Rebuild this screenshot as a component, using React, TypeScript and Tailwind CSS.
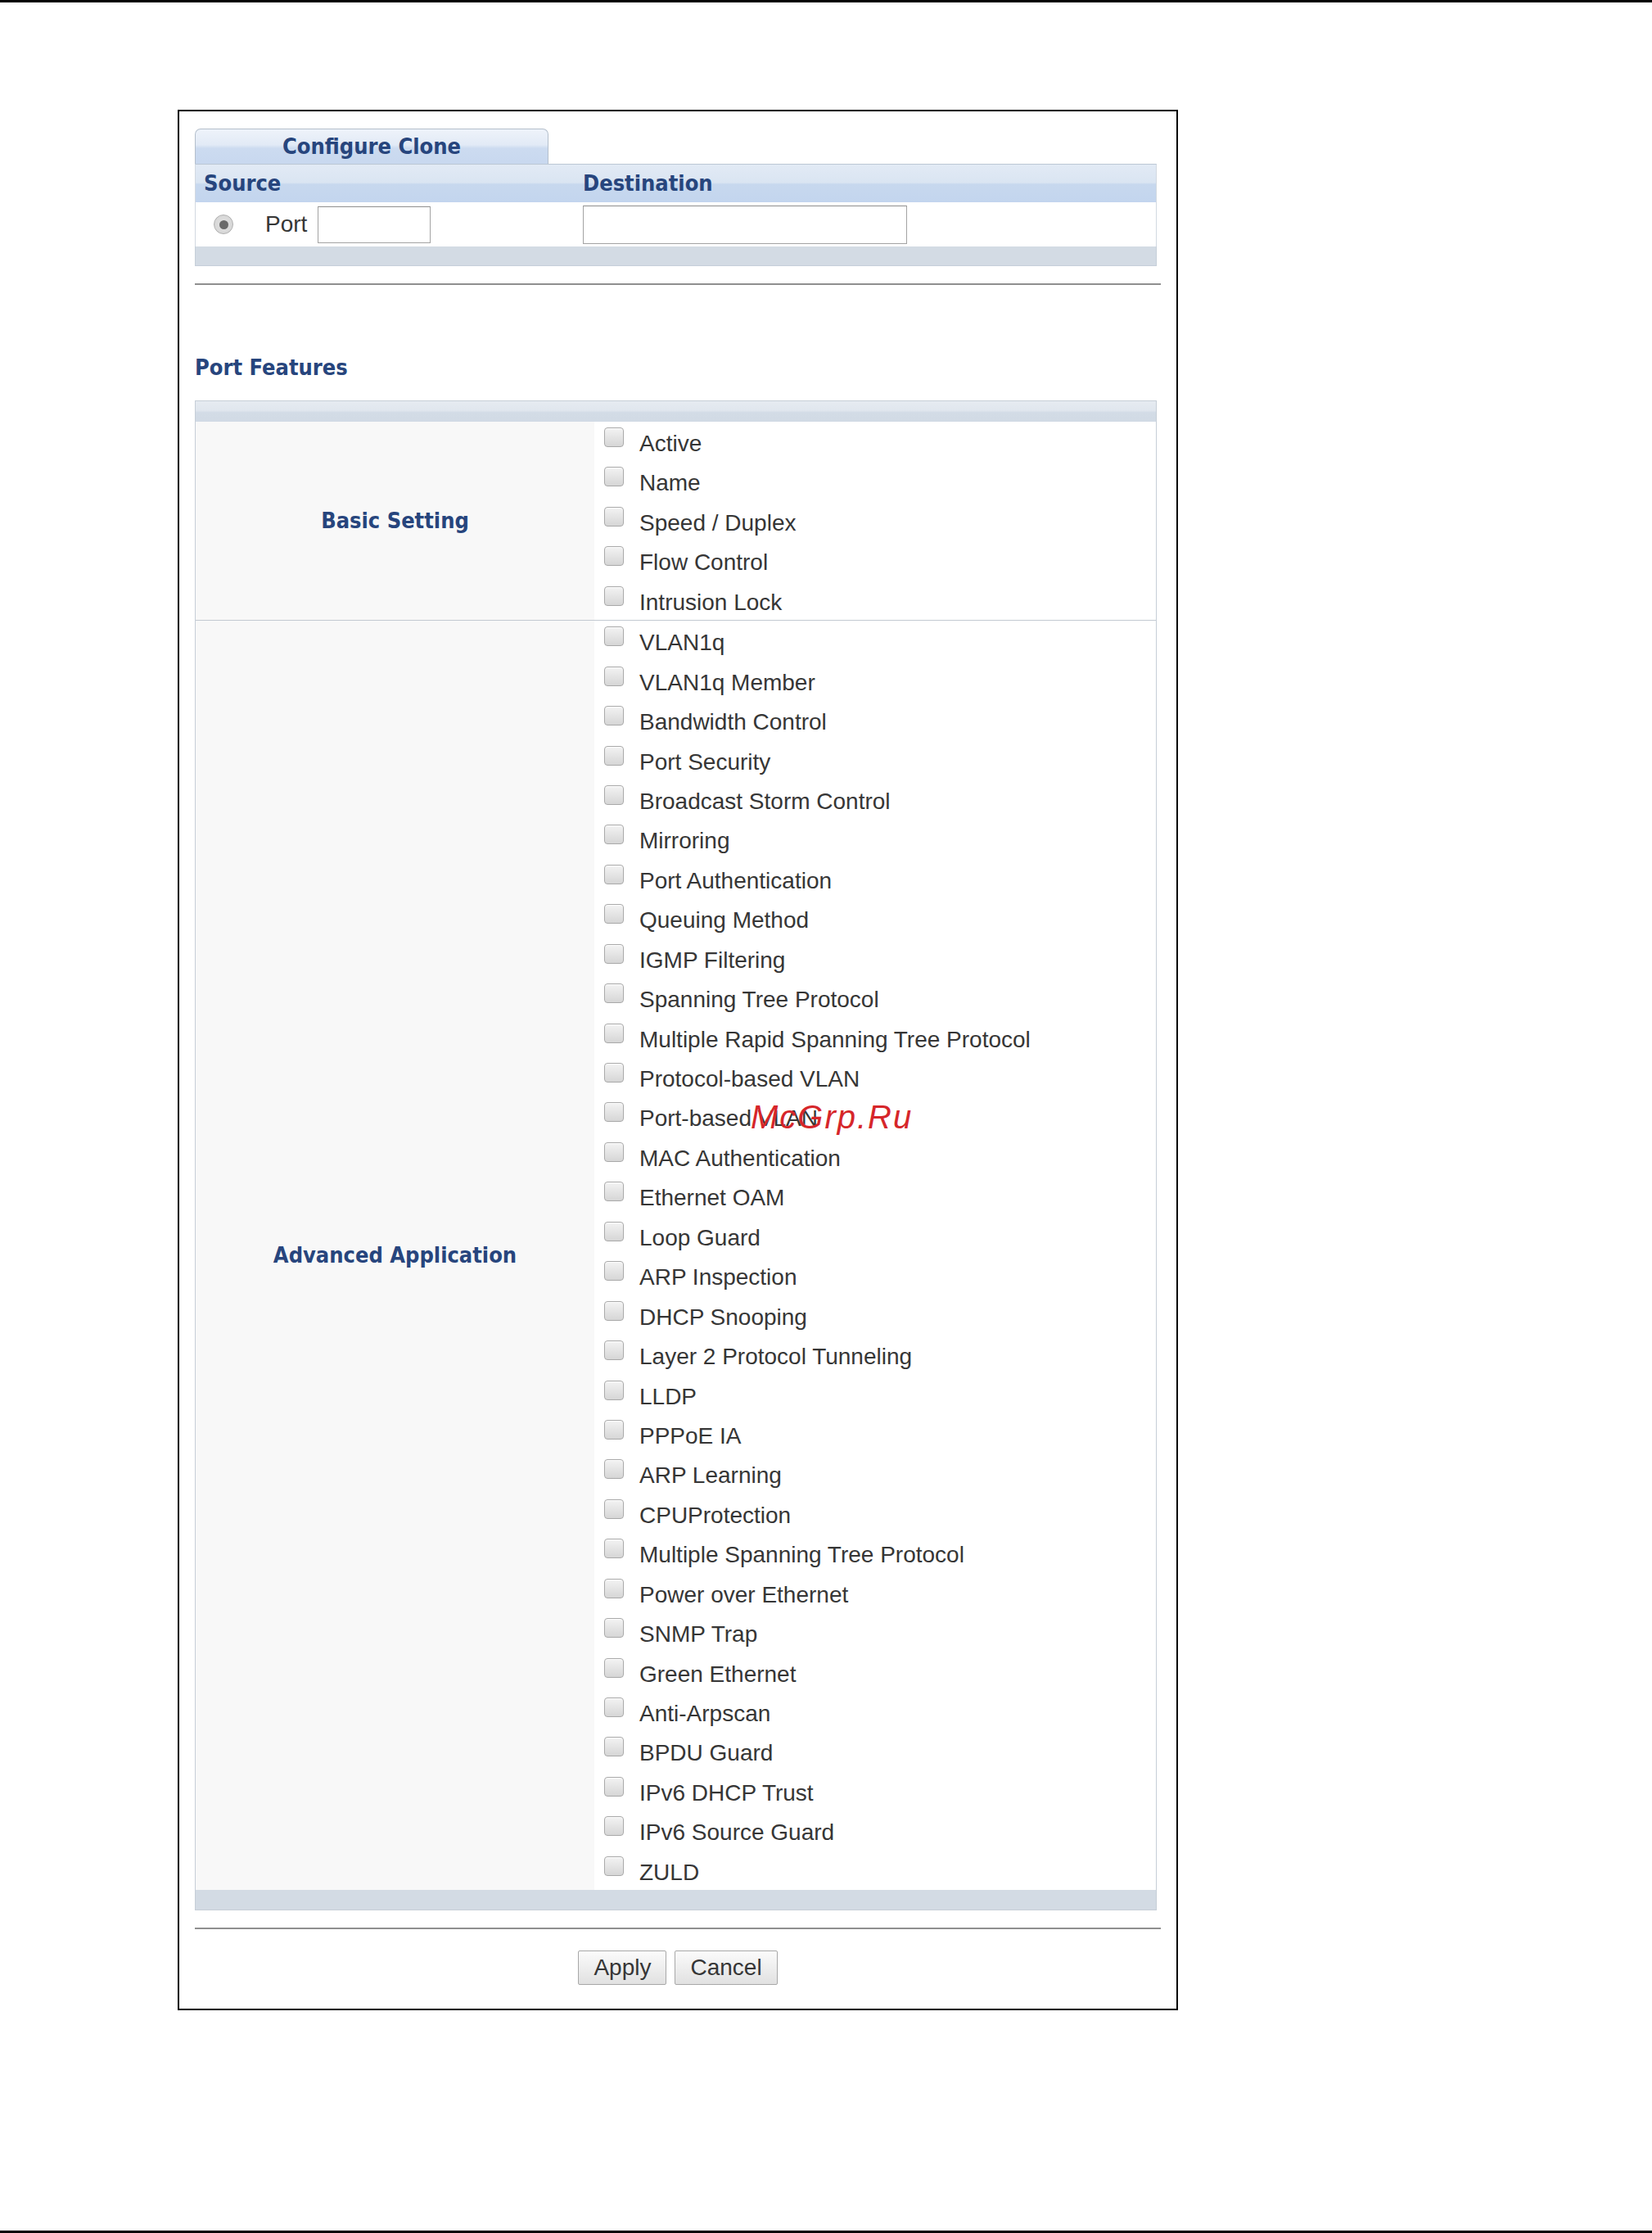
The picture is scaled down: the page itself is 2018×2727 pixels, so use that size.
import React from "react";

const basic = ["Active", "Name", "Speed / Duplex", "Flow Control", "Intrusion Lock"];
const advanced = [
  "VLAN1q",
  "VLAN1q Member",
  "Bandwidth Control",
  "Port Security",
  "Broadcast Storm Control",
  "Mirroring",
  "Port Authentication",
  "Queuing Method",
  "IGMP Filtering",
  "Spanning Tree Protocol",
  "Multiple Rapid Spanning Tree Protocol",
  "Protocol-based VLAN",
  "Port-based VLAN",
  "MAC Authentication",
  "Ethernet OAM",
  "Loop Guard",
  "ARP Inspection",
  "DHCP Snooping",
  "Layer 2 Protocol Tunneling",
  "LLDP",
  "PPPoE IA",
  "ARP Learning",
  "CPUProtection",
  "Multiple Spanning Tree Protocol",
  "Power over Ethernet",
  "SNMP Trap",
  "Green Ethernet",
  "Anti-Arpscan",
  "BPDU Guard",
  "IPv6 DHCP Trust",
  "IPv6 Source Guard",
  "ZULD",
];

const headFont =
  "font-['DejaVu_Sans_Condensed','DejaVu_Sans','Liberation_Sans',sans-serif] font-bold text-[27px] text-[#27457d]";
const bodyFont = "font-['Liberation_Sans','Arial',sans-serif] text-[28px] text-[#363636]";

function CheckRow({ label }: { label: string }) {
  return (
    <div className="flex h-[48.45px] items-start">
      <div className="mt-[7px] h-[24px] w-[24px] rounded-[4px] border border-[#a9a9a9] bg-[linear-gradient(to_bottom,#f3f3f3,#d6d6d6)] shadow-[inset_0_1px_1px_rgba(255,255,255,0.8)]" />
      <span className={`${bodyFont} ml-[19px] mt-[11px] leading-[32px] whitespace-nowrap`}>{label}</span>
    </div>
  );
}

function Section({ title, items }: { title: string; items: string[] }) {
  return (
    <div className="flex">
      <div className="flex w-[487px] items-center justify-center bg-[#f8f8f8]">
        <span className={headFont}>{title}</span>
      </div>
      <div className="flex-1 bg-white pl-[12px]">
        {items.map((it) => (
          <CheckRow key={it} label={it} />
        ))}
      </div>
    </div>
  );
}

export default function App() {
  return (
    <div className="relative h-[2727px] w-[2018px] border-t-[3px] border-b-[3px] border-black bg-white">
      <div className="ml-[217px] mt-[131px] flex h-[2321px] w-[1222px] flex-col border-2 border-black pl-[19px] pr-[19px] pt-[21px]">
        {/* Configure Clone */}
        <div className="w-[1175px]">
          <div className="flex h-[43px] w-[432px] items-center justify-center rounded-t-[7px] border border-b-0 border-[#b4bfcc] bg-[linear-gradient(to_bottom,#eef3fa_0%,#e2eaf6_45%,#ccdbf0_55%,#c8d8ef_100%)]">
            <span className={headFont}>Configure Clone</span>
          </div>
          <div className="flex h-[47px] items-center border-x border-t border-x-[#d2d9e1] border-t-[#bcc7d4] bg-[linear-gradient(to_bottom,#e2eaf5_0%,#dae5f2_48%,#c7d8ee_52%,#c3d5ee_100%)]">
            <div className="w-[473px] pl-[10px]">
              <span className={headFont}>Source</span>
            </div>
            <span className={headFont}>Destination</span>
          </div>
          <div className="flex h-[54px] items-center border-x border-[#d2d9e1] bg-white">
            <div className="flex w-[473px] items-center pl-[22px]">
              <div className="flex h-[24px] w-[24px] items-center justify-center rounded-full border border-[#b0b0b0] bg-[radial-gradient(circle,#e4e4e4_0%,#d2d2d2_100%)]">
                <div className="h-[11px] w-[11px] rounded-full bg-[#6a6a6a]" />
              </div>
              <span className={`${bodyFont} ml-[39px] leading-[32px]`}>Port</span>
              <div className="ml-[13px] h-[45px] w-[138px] border border-[#a3a3a3] border-t-[#8f8f8f] bg-white" />
            </div>
            <div className="h-[47px] w-[396px] border border-[#a3a3a3] border-t-[#8f8f8f] bg-white" />
          </div>
          <div className="h-[24px] border-x border-b border-[#c6cfd9] bg-[#d3dbe4]" />
        </div>

        <div className="mt-[21px] w-[1180px] border-t-2 border-[#8f8f8f]" />

        <div className={`${headFont} mt-[85px] leading-[32px]`}>Port Features</div>

        {/* Port Features table */}
        <div className="mt-[24px] w-[1175px] border border-[#c6ced7]">
          <div className="h-[25px] bg-[linear-gradient(to_bottom,#e6ebf1_0%,#e0e6ee_45%,#d3dce6_55%,#d1dae5_100%)]" />
          <Section title="Basic Setting" items={basic} />
          <div className="border-t border-[#c3c9d1]" />
          <Section title="Advanced Application" items={advanced} />
          <div className="h-[24px] bg-[#d3dbe4]" />
        </div>

        <div className="mt-[21px] w-[1180px] border-t-2 border-[#8f8f8f]" />

        <div className="mt-[26px] flex w-[1180px] justify-center gap-[10px]">
          <button className={`${bodyFont} h-[42px] rounded-[2px] border border-[#a8a8a8] bg-[linear-gradient(to_bottom,#fbfbfb,#e1e1e1)] px-[18px] leading-[32px] text-[#333]`}>
            Apply
          </button>
          <button className={`${bodyFont} h-[42px] rounded-[2px] border border-[#a8a8a8] bg-[linear-gradient(to_bottom,#fbfbfb,#e1e1e1)] px-[18px] leading-[32px] text-[#333]`}>
            Cancel
          </button>
        </div>
      </div>

      {/* watermark */}
      <div className="absolute left-[917px] top-[1341px] font-['Liberation_Sans',sans-serif] text-[40px] italic leading-none tracking-[2px] text-[#d6262a]">
        McGrp.Ru
      </div>
    </div>
  );
}
